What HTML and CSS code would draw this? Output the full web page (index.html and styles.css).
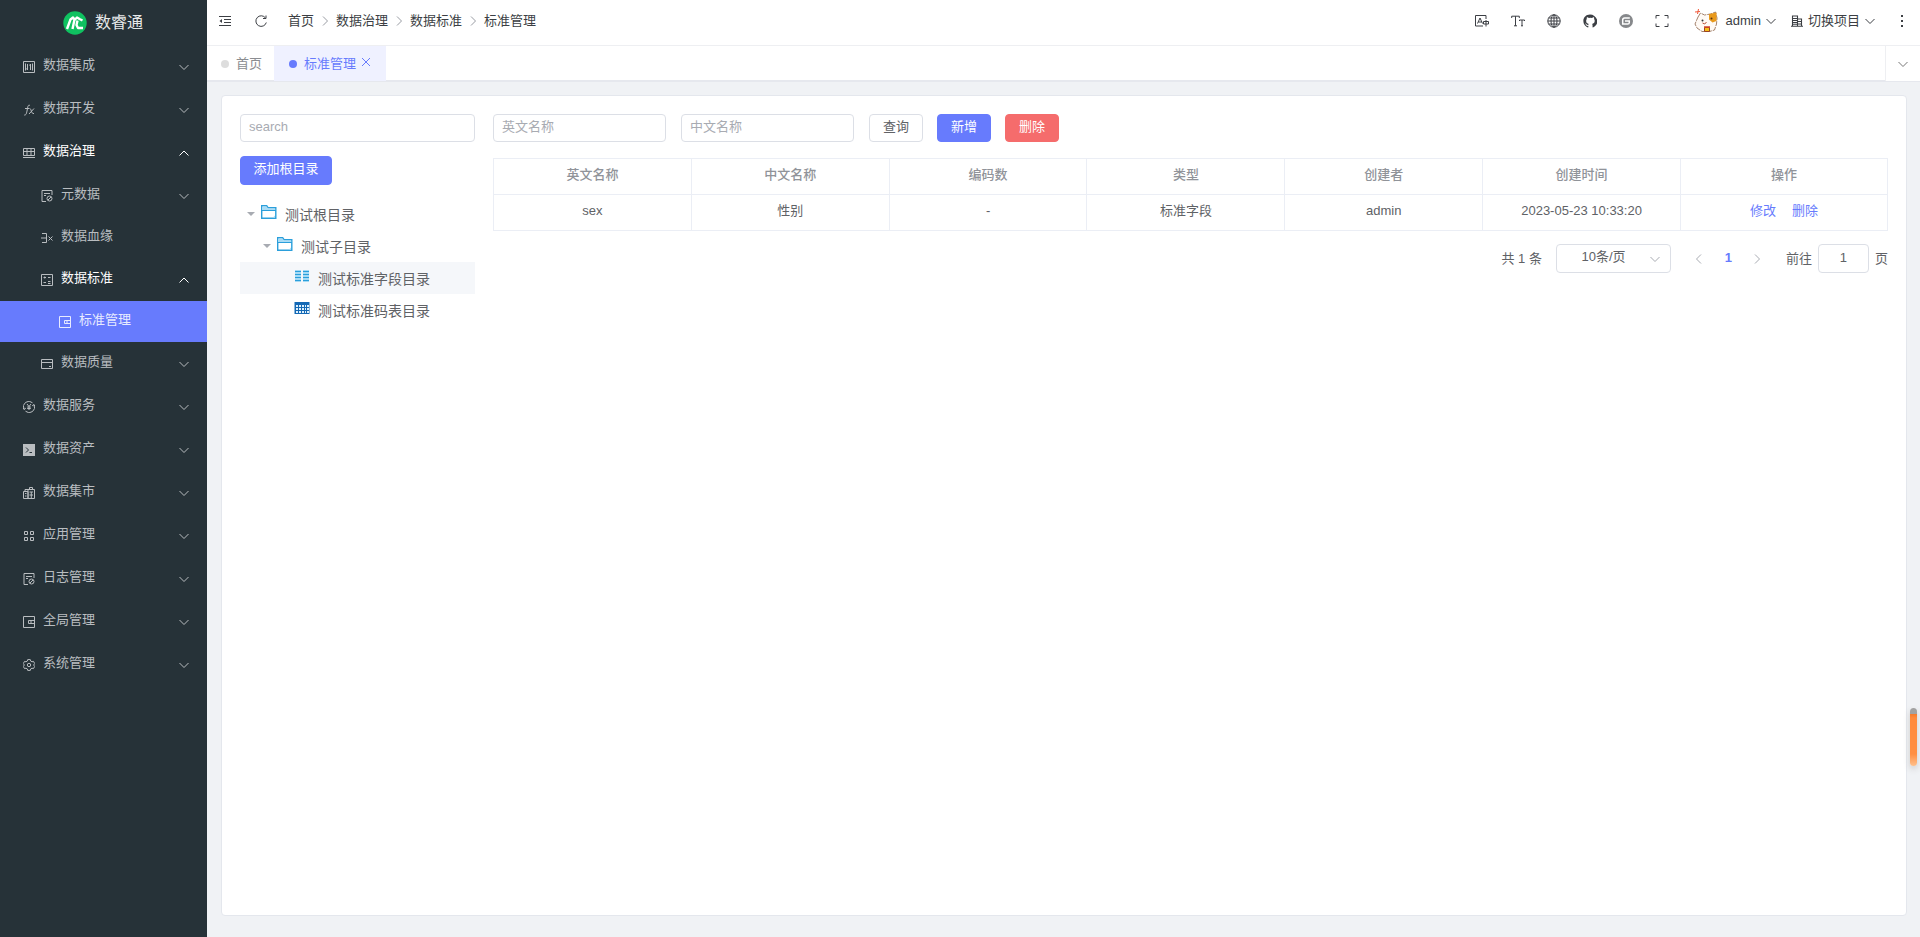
FILE: index.html
```html
<!DOCTYPE html>
<html lang="zh-CN">
<head>
<meta charset="utf-8">
<title>数睿通 - 标准管理</title>
<link rel="stylesheet" href="styles.css">
</head>
<body>
<svg class="sprite" aria-hidden="true">
  <symbol id="down" viewBox="0 0 12 12"><path d="M1.5 4 6 8.5 10.5 4"/></symbol>
  <symbol id="up" viewBox="0 0 12 12"><path d="M1.5 8.500 6 4l4.500 4.500"/></symbol>
  <symbol id="right" viewBox="0 0 12 12"><path d="M4 1.500 8.500 6 4 10.500"/></symbol>
  <symbol id="left" viewBox="0 0 12 12"><path d="M8 1.500 3.500 6 8 10.500"/></symbol>
  <symbol id="wallet" viewBox="0 0 12 12"><path d="M.5.5h11v11H.5zM11.500 4.500h-6v3h6M7 6h2"/></symbol>
  <symbol id="doc" viewBox="0 0 12 12"><path d="M5 11.500H1V.5h10V5M3 3.500h6M3 5.500h2"/><circle cx="8.500" cy="8.500" r="2.500"/><path d="M7 10l3-3"/></symbol>
  <symbol id="folder" viewBox="0 0 16 14"><path d="M.7 12.600V.8h5l1.500 2h7.600v10.500H.7z" fill="#fff" stroke="#2b9fdb" stroke-width="1.400"/><path d="M1.400 1.500h4l1.500 2h7.300v1.700H1.400z" fill="#a9dcf6"/><path d="M1 5.500h14" stroke="#2b9fdb"/><path d="M12 12.500l2-2v2z" fill="#a9dcf6"/></symbol>
</svg>
<div class="layout">
  <aside class="sidebar">
    <div class="brand">
      <svg class="logo" viewBox="0 0 24 24"><circle cx="12" cy="12" r="11.700" fill="#0fc160"/><path d="M4 18 7.500 8.500l2.500-2 1.500 2L9.500 18M11 9.500 14 6.500l2.500 1.500 3 1.500M14.500 9.500 13.500 14l1.500 3h5" fill="none" stroke="#fff" stroke-width="2.400" stroke-linejoin="round"/></svg>
      <span>数睿通</span>
    </div>
    <nav class="menu">
      <a href="#" class="item"><svg class="ic" viewBox="0 0 12 12"><path d="M.5.5h11v11H.5zM2.500 2.500v7M4.500 3v6L3.500 7.500M7.500 9V3L6.500 4.500M9.500 2.500v7"/></svg><span>数据集成</span><svg class="chev"><use href="#down"/></svg></a>
      <a href="#" class="item"><svg class="ic" viewBox="0 0 12 12"><path d="M7 1.500C4.800.3 4.800 3 4.200 6s-1 5.500-3 5M2 4.500h4M6.500 4.500c2-.5 1.500 6 4.500 5M11 4.500 6 10"/></svg><span>数据开发</span><svg class="chev"><use href="#down"/></svg></a>
      <a href="#" class="item open"><svg class="ic" viewBox="0 0 12 12"><path d="M.5 1.500h11v7H.5zM.5 4.500h11M4 1.500v7M8 1.500v7M0 10.500h12"/></svg><span>数据治理</span><svg class="chev"><use href="#up"/></svg></a>
      <a href="#" class="item sub"><svg class="ic"><use href="#doc"/></svg><span>元数据</span><svg class="chev"><use href="#down"/></svg></a>
      <a href="#" class="item sub leaf"><svg class="ic" viewBox="0 0 12 12"><path d="M1 1.500h4.500V6H0M5.500 6v4.500H1M7.500 4.500l4 4M11.500 4.500l-4 4"/></svg><span>数据血缘</span></a>
      <a href="#" class="item sub open"><svg class="ic" viewBox="0 0 12 12"><path d="M.5.5h11v11H.5zM2.500 3.500h2.500M7 3.500h2.500M2.500 8.500h2.500M3.700 2.500v2M7 7.500h2.500M7 9.500h2.500"/></svg><span>数据标准</span><svg class="chev"><use href="#up"/></svg></a>
      <a href="#" class="item sub2 leaf active"><svg class="ic"><use href="#wallet"/></svg><span>标准管理</span></a>
      <a href="#" class="item sub"><svg class="ic" viewBox="0 0 12 12"><path d="M.5 1.500h11v9H.5zM.5 4.500h11M8 8.500h2"/></svg><span>数据质量</span><svg class="chev"><use href="#down"/></svg></a>
      <a href="#" class="item"><svg class="ic" viewBox="0 0 12 12"><path d="M1 8.200A5.400 5.400 0 0 1 9.500 1.800M11 3.800A5.400 5.400 0 0 1 2.500 10.200M4 3l2 2.500L8 3M6 5.500V9M4.200 6h3.600M4.200 7.500h3.600M0 6.500l1 2 1.800-1.300M12 5.500l-1-2-1.800 1.300"/></svg><span>数据服务</span><svg class="chev"><use href="#down"/></svg></a>
      <a href="#" class="item"><svg class="ic" viewBox="0 0 12 12"><path d="M0 0h12v12H0z" fill="currentColor" stroke="none"/><path d="M3 3.500 5.500 6 3 8.500M6.500 8.500H9" stroke="#263238"/></svg><span>数据资产</span><svg class="chev"><use href="#down"/></svg></a>
      <a href="#" class="item"><svg class="ic" viewBox="0 0 12 12"><path d="M.5 4.500H5v7H.5zM5 11.500h6.500v-9H5zM6.500 2.500V.5h3v2M2 4V2.500h3M2 6.500h1.500M2 9h1.500M6.500 5h3.500M8.300 5v6M6.500 8H10"/></svg><span>数据集市</span><svg class="chev"><use href="#down"/></svg></a>
      <a href="#" class="item"><svg class="ic" viewBox="0 0 12 12"><path d="M1.500 1.500h3v3h-3zM7.500 1.500h3v3h-3zM1.500 7.500h3v3h-3zM7.500 7.500h3v3h-3z"/></svg><span>应用管理</span><svg class="chev"><use href="#down"/></svg></a>
      <a href="#" class="item"><svg class="ic"><use href="#doc"/></svg><span>日志管理</span><svg class="chev"><use href="#down"/></svg></a>
      <a href="#" class="item"><svg class="ic"><use href="#wallet"/></svg><span>全局管理</span><svg class="chev"><use href="#down"/></svg></a>
      <a href="#" class="item"><svg class="ic" viewBox="0 0 12 12"><path d="M4.700.6h2.600l.4 1.500 1.300.7 1.500-.4 1.200 2.200L10.600 6l1.100 1.400-1.200 2.200-1.500-.4-1.300.7-.4 1.500H4.700l-.4-1.500L3 9.200l-1.500.4L.3 7.400 1.400 6 .3 4.600l1.200-2.200 1.500.4 1.300-.7z"/><circle cx="6" cy="6" r="1.700"/></svg><span>系统管理</span><svg class="chev"><use href="#down"/></svg></a>
    </nav>
  </aside>
  <div class="main">
    <header class="topbar">
      <button class="tool" aria-label="折叠菜单"><svg class="ic" viewBox="0 0 12 12"><path d="M0 1.500h12M5 4.500h7M5 7.500h7M0 10.500h12"/><path d="M3 4v4L.5 6z" fill="currentColor" stroke="none"/></svg></button>
      <button class="tool" aria-label="刷新"><svg class="ic" viewBox="0 0 12 12"><path d="M10.500 3A5.300 5.300 0 1 0 11.300 7.500M11 .5V3.500H8"/></svg></button>
      <nav class="crumbs">
        <a href="#">首页</a><svg class="sep"><use href="#right"/></svg><a href="#">数据治理</a><svg class="sep"><use href="#right"/></svg><a href="#">数据标准</a><svg class="sep"><use href="#right"/></svg><a href="#">标准管理</a>
      </nav>
      <div class="tools">
        <button class="tool" aria-label="语言"><svg class="ic wide" viewBox="0 0 14 12"><path d="M11 4V.5H.5v10.500H8M2.500 8.500 5 3l2.500 5.500M3.300 7h3.400M8.500 6.500h5v2.500h-5zM11 5v6.500"/></svg></button>
        <button class="tool" aria-label="字号"><svg class="ic wide" viewBox="0 0 14 12"><path d="M.7 3V1.200h7.600V3M4.500 1.200v9.600M3 10.800h3M8.500 6V5h5v1M11 5v5.800M10 10.800h2"/></svg></button>
        <button class="tool" aria-label="国际化"><svg class="ic wide" viewBox="0 0 14 14"><circle cx="7" cy="7" r="6.200"/><ellipse cx="7" cy="7" rx="3" ry="6.200"/><path d="M7 .8v12.400M.8 7h12.400M1.600 4h10.800M1.600 10h10.800"/></svg></button>
        <button class="tool" aria-label="GitHub"><svg class="ic wide" viewBox="0 0 16 16"><path fill="currentColor" stroke="none" d="M8 .7C3.600.7.4 4 .4 8c0 3.400 2.200 6.300 5.200 7.300.4.1.5-.2.500-.4v-1.400c-2.100.5-2.600-1-2.600-1-.3-.9-.9-1.100-.9-1.100-.7-.5.1-.5.1-.5.8.1 1.200.8 1.200.8.7 1.200 1.800.9 2.200.7.100-.5.300-.9.500-1.100-1.700-.2-3-1-3-3.500 0-.8.300-1.500.8-2-.1-.2-.3-1 .1-2 0 0 .6-.2 2.100.8a7 7 0 0 1 3.800 0c1.400-1 2.100-.8 2.100-.8.4 1 .2 1.800.1 2 .5.500.8 1.200.8 2 0 2.500-1.500 3.300-3 3.500.3.300.5.800.5 1.500v2.100c0 .2.100.5.500.4 3-1 5.200-3.900 5.200-7.300C15.600 4 12.400.7 8 .7z"/></svg></button>
        <button class="tool gitee" aria-label="Gitee"><svg class="ic wide" viewBox="0 0 14 14"><circle cx="7" cy="7" r="7" fill="currentColor" stroke="none"/><path d="M10.800 4H5.700Q3.700 4 3.700 6v4h5q1.600 0 1.600-1.600V7H6" stroke="#fff" stroke-width="1.500"/></svg></button>
        <button class="tool" aria-label="全屏"><svg class="ic wide" viewBox="0 0 14 14"><path d="M1 4.500V1.500h3.500M9.500 1.500H13v3M13 9.500v3H9.500M4.500 12.500H1v-3"/></svg></button>
      </div>
      <button class="user"><svg class="avatar" viewBox="0 0 24 24"><path d="M4 8 6.500 4l4 2 6-1 5-2 1.500 6-.5 6-2 6-5 1.500H8L3 19 1 15z" fill="#fffaf5" stroke="#8b6247" stroke-width=".8" stroke-dasharray="5 1"/><path d="M15 5 22.500 3.500V12l-4 1.500-3.500-3z" fill="#e99a1c"/><circle cx="8.500" cy="11.500" r="1" fill="#333"/><circle cx="17.500" cy="9.500" r="1" fill="#573112"/><path d="M8.500 14q2.500 2.500 4-1" fill="none" stroke="#b95138"/><path d="M10.500 18.500h5v4h-5z" fill="#f7bd17" stroke="#9a4424"/><path d="M10 18h6" stroke="#d44427" stroke-width="1.500"/><path d="M1 3l5-.5M4.500 0 3.500 5" stroke="#f15a3b"/></svg><span>admin</span><svg class="chev"><use href="#down"/></svg></button>
      <button class="project"><svg class="ic" viewBox="0 0 12 12"><path d="M1.500 11V1h5v10M6.500 4h4v7M0 11.300h12M2 3.500h4M2 5.500h4M2 7.500h4M2 9.300h4M7 6.500h3M7 9h3" stroke-width="1.100"/></svg><span>切换项目</span><svg class="chev"><use href="#down"/></svg></button>
      <button class="tool more" aria-label="更多"><svg class="ic" viewBox="0 0 12 12"><path d="M5 0h2v2H5zM5 5h2v2H5zM5 10h2v2H5z" fill="currentColor" stroke="none"/></svg></button>
    </header>
    <div class="tabs">
      <a href="#" class="tab"><i class="dot"></i>首页</a>
      <a href="#" class="tab current"><i class="dot"></i>标准管理<svg class="close" viewBox="0 0 10 10"><path d="M1 1l8 8M9 1 1 9"/></svg></a>
      <button class="tabmenu" aria-label="标签操作"><svg class="chev"><use href="#down"/></svg></button>
    </div>
    <main class="content">
      <section class="card">
        <div class="side">
          <input class="field" type="text" placeholder="search" aria-label="search">
          <button class="btn primary add">添加根目录</button>
          <ul class="tree">
            <li class="node"><i class="caret"></i><svg class="folder"><use href="#folder"/></svg><span>测试根目录</span></li>
            <li class="node level2"><i class="caret"></i><svg class="folder"><use href="#folder"/></svg><span>测试子目录</span></li>
            <li class="node level3 selected"><svg class="folder" viewBox="0 0 16 14"><path d="M1 2.500h6M9 2.500h6M1 5.500h6M9 5.500h6M1 8.500h6M9 8.500h6M1 11.500h6M9 11.500h6" stroke="#a5daf5" stroke-width="3"/><path d="M1 2.500h6M9 2.500h6M1 5.500h6M9 5.500h6M1 8.500h6M9 8.500h6M1 11.500h6M9 11.500h6" stroke="#2b9fdb"/></svg><span>测试标准字段目录</span></li>
            <li class="node level3"><svg class="folder" viewBox="0 0 16 14"><path d="M.5 1h15v12H.5z" fill="#1368b5"/><path d="M2 4h2v2H2zM5 4h2v2H5zM8 4h2v2H8zM11 4h1v2h-1zM13 4h2v2h-2zM2 7h2v2H2zM5 7h2v2H5zM8 7h2v2H8zM11 7h1v2h-1zM13 7h2v2h-2zM2 10h2v2H2zM5 10h2v2H5zM8 10h2v2H8zM11 10h1v2h-1zM13 10h2v2h-2z" fill="#dff1fc"/></svg><span>测试标准码表目录</span></li>
          </ul>
        </div>
        <div class="body">
          <form class="filters">
            <input class="field" type="text" placeholder="英文名称" aria-label="英文名称">
            <input class="field" type="text" placeholder="中文名称" aria-label="中文名称">
            <button type="button" class="btn">查询</button>
            <button type="button" class="btn primary">新增</button>
            <button type="button" class="btn danger">删除</button>
          </form>
          <table class="grid">
            <thead><tr><th>英文名称</th><th>中文名称</th><th>编码数</th><th>类型</th><th>创建者</th><th>创建时间</th><th class="ops">操作</th></tr></thead>
            <tbody><tr><td>sex</td><td>性别</td><td>-</td><td>标准字段</td><td>admin</td><td>2023-05-23 10:33:20</td><td><a href="#">修改</a><a href="#">删除</a></td></tr></tbody>
          </table>
          <div class="pager">
            <span>共 1 条</span>
            <div class="size"><select aria-label="每页条数"><option>10条/页</option></select><svg class="chev"><use href="#down"/></svg></div>
            <div class="pages">
              <button aria-label="上一页"><svg class="chev"><use href="#left"/></svg></button>
              <button class="on">1</button>
              <button aria-label="下一页"><svg class="chev"><use href="#right"/></svg></button>
            </div>
            <label class="jump">前往<input class="field" type="text" value="1">页</label>
          </div>
        </div>
      </section>
    </main>
  </div>
</div>
<div class="handle"></div>
</body>
</html>
```

FILE: styles.css
```css
* { box-sizing: border-box; }
body {
  margin: 0;
  font: 13px/20px "Liberation Sans", "Noto Sans CJK SC", sans-serif;
  color: #606266;
  background: #f0f2f5;
}
a { color: inherit; text-decoration: none; }
button, input, select { font: inherit; color: inherit; }
button { border: 0; padding: 0; background: none; cursor: pointer; }
svg { fill: none; stroke: currentColor; flex: none; display: block; }
.sprite { position: absolute; width: 0; height: 0; }
.ic { width: 12px; height: 12px; }
.ic.wide { width: 14px; height: 14px; }
.chev { width: 12px; height: 12px; }

.layout { display: flex; min-height: 100vh; }
.sidebar { width: 207px; flex: none; background: #263238; color: #b9bdc0; }
.brand {
  display: flex; align-items: center; justify-content: center; gap: 8px;
  height: 45px; padding-right: 1px; color: #e6e8e9; font-size: 16px;
}
.logo { width: 24px; height: 24px; stroke: none; }
.item { display: flex; align-items: center; height: 43px; padding: 0 17px 0 23px; }
.item span { flex: 1; margin-left: 8px; padding-bottom: 3px; }
.item.sub { padding-left: 41px; }
.item.sub2 { padding-left: 59px; }
.item.leaf { height: 41px; }
.item.open span, .item.open .chev { color: #fff; }
.item.active { background: #677bfd; color: #e8ebff; }

.main { flex: 1; min-width: 0; display: flex; flex-direction: column; }
.topbar {
  display: flex; align-items: center; height: 46px; padding: 0 12px 3px 12px;
  background: #fff; color: #3c3f44; border-bottom: 1px solid #eeeff2;
}
.tool { display: grid; place-items: center; width: 12px; height: 24px; margin-right: 24px; }
.crumbs { display: flex; align-items: center; gap: 5px; margin-left: -3px; }
.sep { width: 12px; height: 12px; color: #999ca3; }
.tools { display: flex; gap: 22px; margin-left: auto; }
.tools .tool { width: 14px; margin: 0; }
.gitee { color: #86888b; }
.user { display: flex; align-items: center; gap: 8px; margin-left: 25px; }
.user .chev { margin-left: -4px; }
.avatar { width: 24px; height: 24px; stroke: none; }
.project { display: flex; align-items: center; gap: 4px; margin-left: 14px; }
.project .ic { margin-right: 1px; }
.more { margin: 0 0 0 20px; }

.tabs { display: flex; height: 36px; background: #fff; border-bottom: 2px solid #e6e8ee; }
.tab { display: flex; align-items: center; height: 35px; padding: 0 12px 0 14px; color: #8b8d91; }
.dot { width: 8px; height: 8px; margin-right: 7px; border-radius: 50%; background: #ddd; }
.tab.current { padding: 0 15px; color: #677bfd; background: #eff1ff; }
.current .dot { background: #677bfd; }
.close { width: 10px; height: 10px; margin: 0 0 4px 5px; }
.tabmenu {
  display: grid; place-items: center; width: 35px; height: 35px; margin-left: auto;
  background: #fff; border-left: 1px solid #eeeff2; color: #777;
}

.content { flex: 1; display: flex; padding: 13px 13px 21px 14px; }
.card {
  flex: 1; display: flex; gap: 18px; min-width: 0; padding: 18px;
  background: #fff; border: 1px solid #e4e7ed; border-radius: 4px;
}
.side { width: 235px; flex: none; }
.body { flex: 1; min-width: 0; }
.field {
  width: 100%; height: 28px; padding: 0 8px 4px 8px; background: #fff;
  border: 1px solid #dcdfe6; border-radius: 4px; outline: 0;
}
.field::placeholder { color: #a8abb2; opacity: 1; }
.side .field { display: block; }
.btn {
  height: 28px; width: 54px; padding: 0 0 2px; border: 1px solid #dcdfe6;
  border-radius: 4px; background: #fff;
}
.primary { color: #fff; background: #677bfd; border-color: #677bfd; }
.danger { color: #fff; background: #f56c6c; border-color: #f56c6c; }
.add { display: block; width: 92px; height: 29px; margin-top: 14px; padding-bottom: 4px; }

.tree { list-style: none; margin: 13px 0 0; padding: 0; font-size: 14px; }
.node { display: flex; align-items: center; height: 32px; padding-left: 7px; }
.level2 { padding-left: 23px; }
.level3 { padding-left: 54px; }
.selected { background: #f5f7fa; }
.caret { margin-right: 6px; border: solid transparent; border-width: 4px 4px 0; border-top-color: #a8abb2; }
.folder { width: 16px; height: 14px; margin-bottom: 4px; stroke: none; }
.node span { margin-left: 8px; padding-top: 2px; }

.filters { display: flex; gap: 15px; }
.filters .field { width: 173px; }
.filters .btn + .btn { margin-left: -1px; }
.grid { width: 100%; margin-top: 16px; border-collapse: collapse; table-layout: fixed; text-align: center; }
.grid th, .grid td { height: 36px; padding: 0 0 3px; border: 1px solid #ebeef5; }
.grid th { color: #909399; font-weight: 500; }
.grid .ops { width: 207px; }
.grid td a { margin: 0 8px; color: #677bfd; }

.pager { display: flex; align-items: center; justify-content: flex-end; margin-top: 13px; }
.size { display: grid; align-items: center; width: 115px; margin-left: 14px; }
.size select {
  grid-area: 1 / 1; height: 29px; padding: 0 20px 3px 0; text-align: center; text-align-last: center;
  appearance: none; background: #fff; border: 1px solid #dcdfe6; border-radius: 4px;
}
.size .chev { grid-area: 1 / 1; justify-self: end; margin-right: 10px; color: #a8abb2; pointer-events: none; }
.pages { display: flex; margin: 0 14px; }
.pages button { display: grid; place-items: center; width: 29px; height: 28px; color: #a8abb2; }
.pages .on { color: #677bfd; font-weight: 700; padding-bottom: 2px; }
.jump { display: flex; align-items: center; gap: 6px; }
.jump .field { width: 51px; height: 29px; padding: 0 0 2px; text-align: center; }

.handle {
  position: fixed; right: 3px; top: 708px; width: 7px; height: 58px;
  border-radius: 4px; box-shadow: 0 3px 6px #ccc;
  background: linear-gradient(#a2a2a2 6px, #f47a2a 6px, #ff8a3c 10px, #ff8f42 46px, #ffc08c);
}
```
